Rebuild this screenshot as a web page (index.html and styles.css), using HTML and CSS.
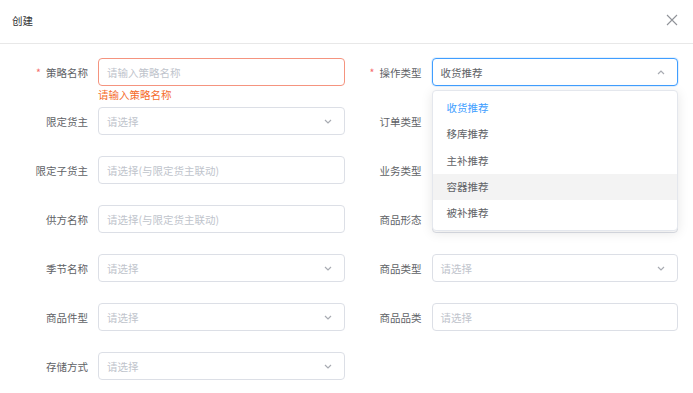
FILE: index.html
```html
<!DOCTYPE html>
<html lang="zh-CN">
<head>
  <meta charset="UTF-8">
  <meta name="viewport" content="width=device-width, initial-scale=1.0">
  <title>创建</title>
  <link rel="stylesheet" href="styles.css">
</head>
<body>
  <div class="dialog">
    <header class="dialog-header">
      <span class="dialog-title">创建</span>
      <svg class="close" width="12" height="12" viewBox="0 0 12 12"><path d="M1 1L11 11M11 1L1 11" stroke="#909399" stroke-width="1.1" fill="none"/></svg>
    </header>
    <form class="form">
      <div class="item">
        <label class="required">策略名称</label>
        <div class="field">
          <div class="input error"><span class="ph">请输入策略名称</span></div>
          <div class="error-msg">请输入策略名称</div>
        </div>
      </div>
      <div class="item">
        <label class="required">操作类型</label>
        <div class="field">
          <div class="input focus"><span class="val">收货推荐</span>
            <svg class="arrow" width="8" height="5" viewBox="0 0 8 5"><path d="M1 4L4 1L7 4" stroke="#a8abb2" stroke-width="1.2" fill="none"/></svg>
          </div>
          <!-- 열린 드롭다운 -->
          <ul class="dropdown">
            <li class="selected">收货推荐</li>
            <li>移库推荐</li>
            <li>主补推荐</li>
            <li class="hover">容器推荐</li>
            <li>被补推荐</li>
          </ul>
        </div>
      </div>
      <div class="item">
        <label>限定货主</label>
        <div class="input"><span class="ph">请选择</span>
          <svg class="arrow" width="8" height="5" viewBox="0 0 8 5"><path d="M1 1L4 4L7 1" stroke="#a8abb2" stroke-width="1.2" fill="none"/></svg>
        </div>
      </div>
      <div class="item">
        <label>订单类型</label>
        <div class="input"></div>
      </div>
      <div class="item">
        <label>限定子货主</label>
        <div class="input"><span class="ph">请选择(与限定货主联动)</span></div>
      </div>
      <div class="item">
        <label>业务类型</label>
        <div class="input"></div>
      </div>
      <div class="item">
        <label>供方名称</label>
        <div class="input"><span class="ph">请选择(与限定货主联动)</span></div>
      </div>
      <div class="item">
        <label>商品形态</label>
        <div class="input"></div>
      </div>
      <div class="item">
        <label>季节名称</label>
        <div class="input"><span class="ph">请选择</span>
          <svg class="arrow" width="8" height="5" viewBox="0 0 8 5"><path d="M1 1L4 4L7 1" stroke="#a8abb2" stroke-width="1.2" fill="none"/></svg>
        </div>
      </div>
      <div class="item">
        <label>商品类型</label>
        <div class="input"><span class="ph">请选择</span>
          <svg class="arrow" width="8" height="5" viewBox="0 0 8 5"><path d="M1 1L4 4L7 1" stroke="#a8abb2" stroke-width="1.2" fill="none"/></svg>
        </div>
      </div>
      <div class="item">
        <label>商品件型</label>
        <div class="input"><span class="ph">请选择</span>
          <svg class="arrow" width="8" height="5" viewBox="0 0 8 5"><path d="M1 1L4 4L7 1" stroke="#a8abb2" stroke-width="1.2" fill="none"/></svg>
        </div>
      </div>
      <div class="item">
        <label>商品品类</label>
        <div class="input"><span class="ph">请选择</span></div>
      </div>
      <div class="item">
        <label>存储方式</label>
        <div class="input"><span class="ph">请选择</span>
          <svg class="arrow" width="8" height="5" viewBox="0 0 8 5"><path d="M1 1L4 4L7 1" stroke="#a8abb2" stroke-width="1.2" fill="none"/></svg>
        </div>
      </div>
    </form>
  </div>
</body>
</html>
```
FILE: styles.css
```css
* {
  margin: 0;
  padding: 0;
  box-sizing: border-box;
}
body {
  background-color: #fff;
  font-family: "Noto Sans CJK SC", "Noto Sans", sans-serif;
  color: #606266;
  overflow: hidden;
}
.dialog-header {
  height: 44px;
  display: flex;
  align-items: center;
  justify-content: space-between;
  padding: 0 15px 0 12px;
  border-bottom: 1px solid #e8e8e8;
}
.dialog-title {
  font-size: 10.5px;
  color: #303133;
  margin-top: -3px;
}
.close {
  margin-top: -3px;
}
.form {
  display: grid;
  grid-template-columns: 1fr 1fr;
  column-gap: 10px;
  row-gap: 21px;
  padding: 14px 15px 0 21px;
}
.item {
  display: flex;
  align-items: center;
  height: 28px;
}
.item > label {
  width: 77px;
  flex-shrink: 0;
  text-align: right;
  padding-right: 10px;
  font-size: 10.5px;
  color: #606266;
}
.required::before {
  content: "*";
  color: #f56c6c;
  margin-right: 5px;
}
.field {
  flex: 1;
  position: relative;
  height: 28px;
}
.input {
  flex: 1;
  height: 28px;
  border: 1px solid #dcdfe6;
  border-radius: 4px;
  display: flex;
  align-items: center;
  justify-content: space-between;
  padding: 0 12px 0 8px;
  font-size: 10.5px;
  background-color: #fff;
}
.input.error {
  border-color: #f5947f;
}
.input.focus {
  border-color: #409eff;
  box-shadow: 0 0 0 1px rgba(64, 158, 255, 0.15);
}
.ph {
  color: #c0c4cc;
}
.val {
  color: #606266;
}
.error-msg {
  position: absolute;
  top: 100%;
  left: 0;
  padding-top: 2px;
  font-size: 10.5px;
  color: #f56c2c;
  line-height: 14px;
}
.dropdown {
  position: absolute;
  top: 32px;
  left: 0;
  right: 0;
  z-index: 2;
  list-style-type: none;
  background-color: #fff;
  border: 1px solid #e4e7ed;
  border-radius: 4px;
  box-shadow: 0 2px 12px rgba(0, 0, 0, 0.1);
  padding: 4px 0;
}
.dropdown > li {
  height: 26.3px;
  line-height: 26px;
  padding: 0 14px;
  font-size: 10.5px;
  color: #606266;
}
.dropdown > li.selected {
  color: #409eff;
}
.dropdown > li.hover {
  background-color: #f3f3f3;
}
```
